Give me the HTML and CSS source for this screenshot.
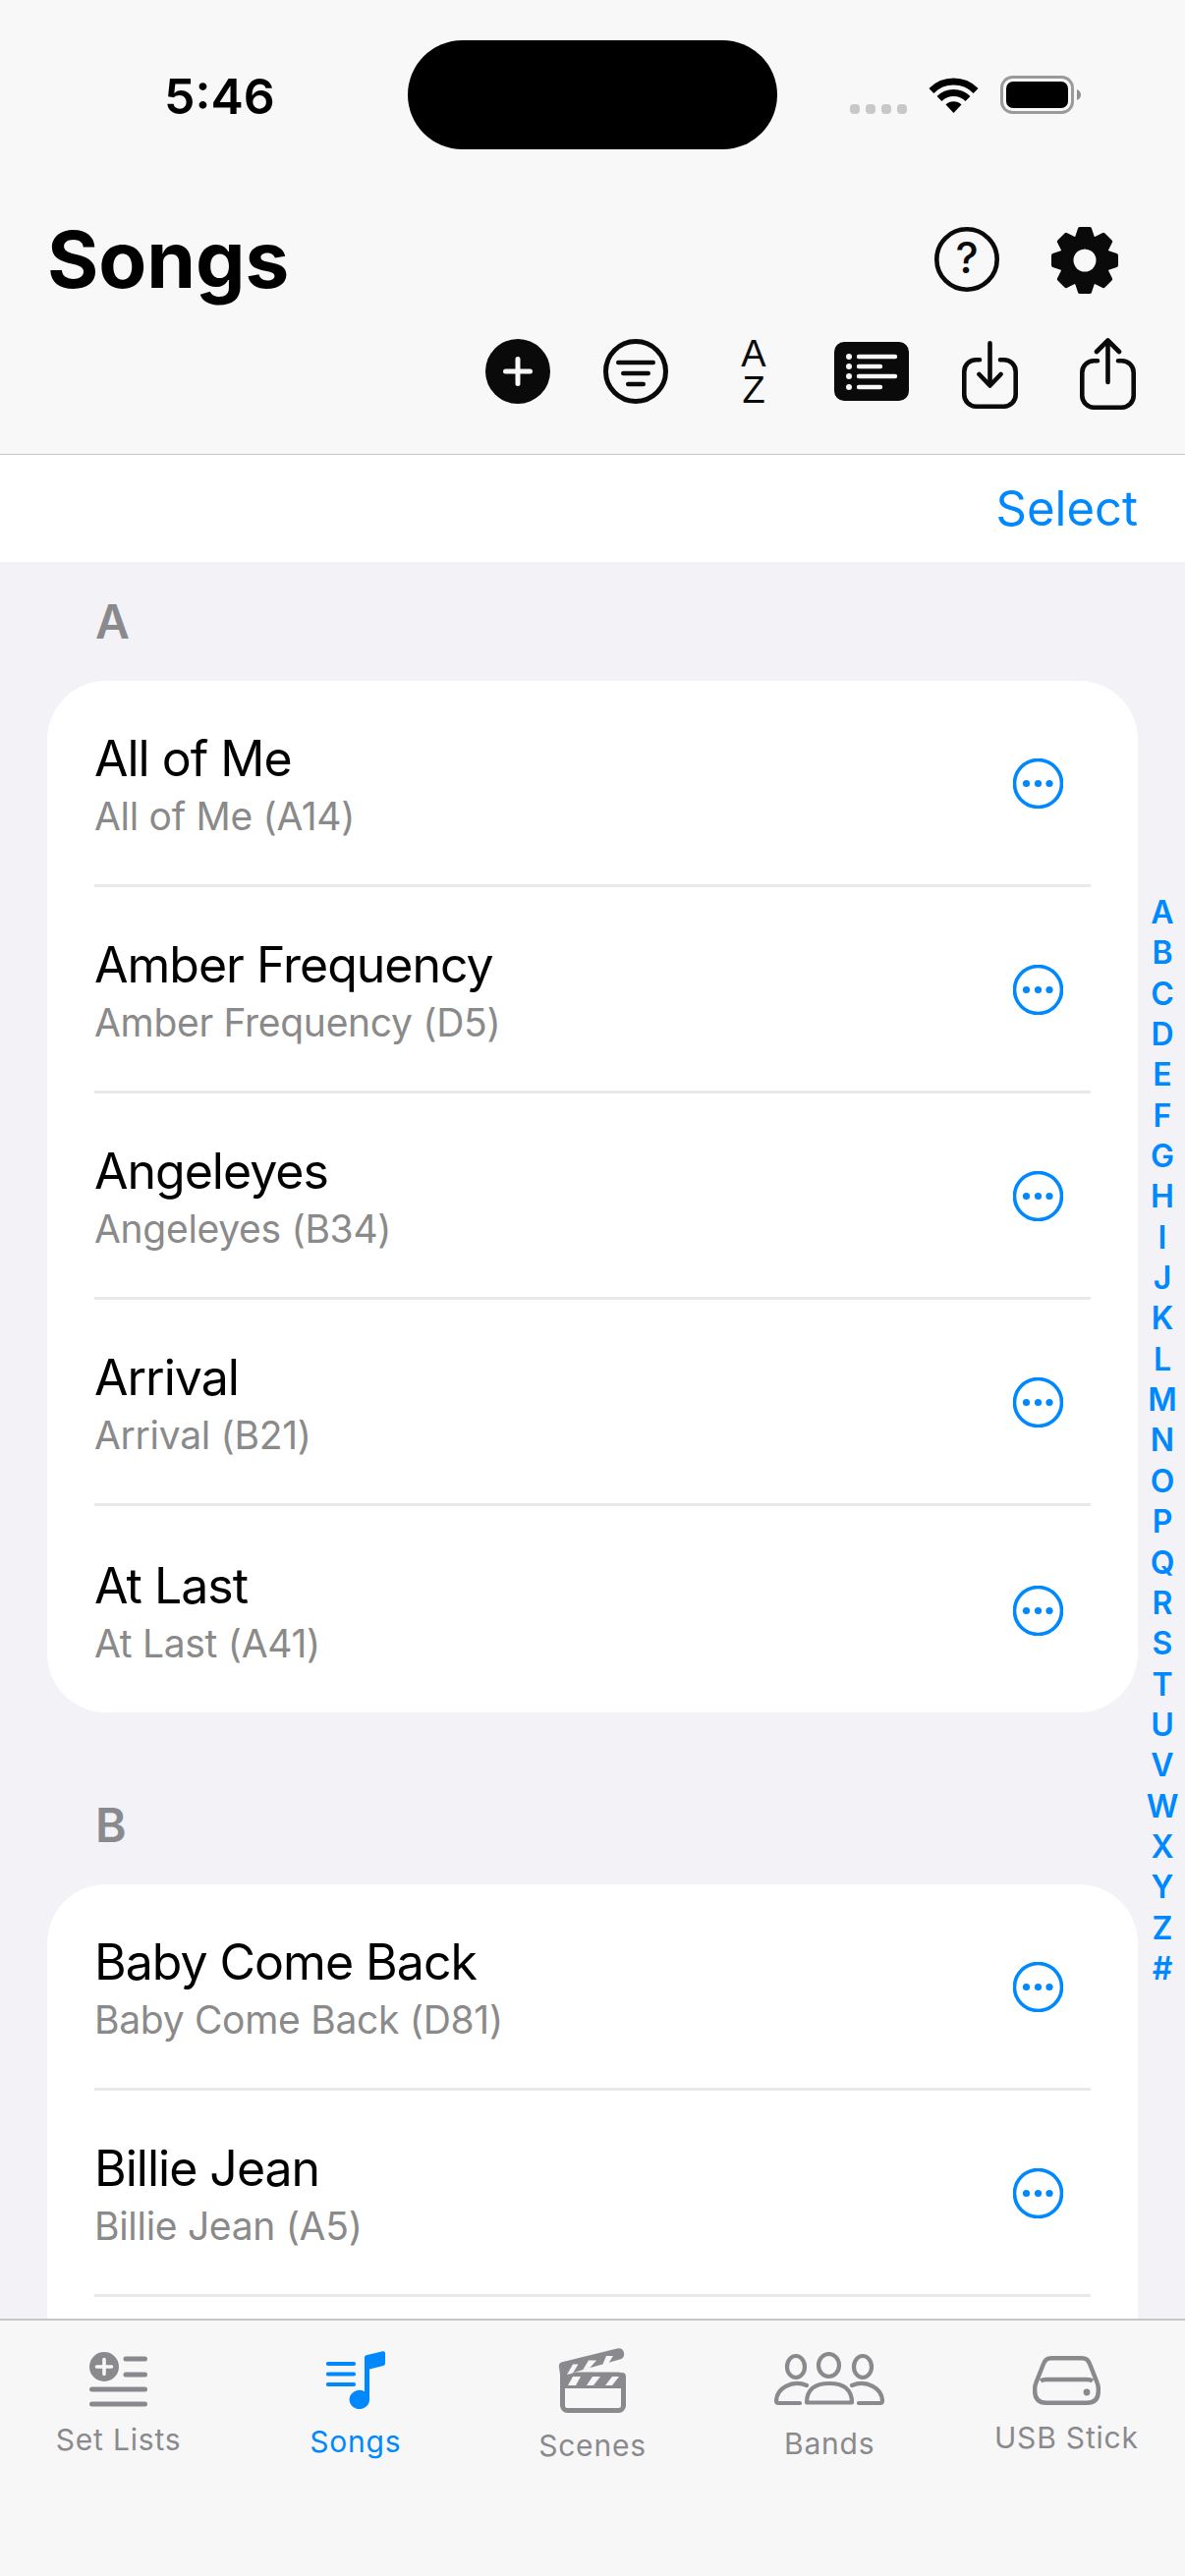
FILE: index.html
```html
<!DOCTYPE html>
<html lang="en">
<head>
  <meta charset="UTF-8" />
  <title>Songs</title>
  <link rel="stylesheet" href="styles.css">
</head>
<body>
<div class="app">

  <header class="top">
    <div class="status">
      <span class="time">5:46</span>
      <span class="island"></span>
      <div class="status-right">
        <span class="signal"><i></i><i></i><i></i><i></i></span>
        <svg class="wifi" width="51" height="37" viewBox="0 0 51 37">
          <path d="M2.9 14.4A32 32 0 0 1 48.1 14.4" fill="none" stroke="#000" stroke-width="7"/>
          <path d="M11 22.5A20.5 20.5 0 0 1 40 22.5" fill="none" stroke="#000" stroke-width="7"/>
          <path d="M25.5 37L17.5 28.5A11.5 11.5 0 0 1 33.5 28.5Z" fill="#000"/>
        </svg>
        <svg class="battery" width="82" height="39" viewBox="0 0 82 39">
          <rect x="1.5" y="1.5" width="72" height="36" rx="11" fill="none" stroke="#9a9a9a" stroke-width="3"/>
          <rect x="6" y="6" width="63" height="27" rx="7" fill="#000"/>
          <path d="M78 14C80.5 15 82 17 82 19.5C82 22 80.5 24 78 25Z" fill="#8e8e8e"/>
        </svg>
      </div>
    </div>

    <div class="title-row">
      <h1>Songs</h1>
      <div class="title-actions">
        <button class="icon-btn">
          <svg width="66" height="66" viewBox="0 0 66 66">
            <circle cx="33" cy="33" r="30.7" fill="none" stroke="#0a0a0a" stroke-width="4.6"/>
            <text x="33" y="47" text-anchor="middle" class="help-mark">?</text>
          </svg>
        </button>
        <button class="icon-btn">
          <svg width="68" height="68" viewBox="-34 -34 68 68">
            <g fill="#0a0a0a" stroke="#0a0a0a" stroke-width="4" stroke-linejoin="round">
              <circle r="24"/>
              <path d="M-8 -23L-5 -32H5L8 -23Z"/>
              <path d="M-8 -23L-5 -32H5L8 -23Z" transform="rotate(45)"/>
              <path d="M-8 -23L-5 -32H5L8 -23Z" transform="rotate(90)"/>
              <path d="M-8 -23L-5 -32H5L8 -23Z" transform="rotate(135)"/>
              <path d="M-8 -23L-5 -32H5L8 -23Z" transform="rotate(180)"/>
              <path d="M-8 -23L-5 -32H5L8 -23Z" transform="rotate(225)"/>
              <path d="M-8 -23L-5 -32H5L8 -23Z" transform="rotate(270)"/>
              <path d="M-8 -23L-5 -32H5L8 -23Z" transform="rotate(315)"/>
            </g>
            <circle r="11.5" fill="#f8f8f8"/>
          </svg>
        </button>
      </div>
    </div>

    <div class="toolbar">
      <button class="icon-btn nudge-1">
        <svg width="66" height="66" viewBox="0 0 66 66">
          <circle cx="33" cy="33" r="33" fill="#0a0a0a"/>
          <path d="M20.5 33H45.5M33 20.5V45.5" stroke="#f8f8f8" stroke-width="5" stroke-linecap="round"/>
        </svg>
      </button>
      <button class="icon-btn nudge-1">
        <svg width="66" height="66" viewBox="0 0 66 66" fill="none" stroke="#0a0a0a">
          <circle cx="33" cy="33" r="30.5" stroke-width="5"/>
          <path d="M15.3 24H50.7M20.3 35H45.7M25.3 46H40.7" stroke-width="4.6" stroke-linecap="round"/>
        </svg>
      </button>
      <button class="icon-btn nudge-1">
        <span class="az"><span>A</span><span>Z</span></span>
      </button>
      <button class="icon-btn nudge-4">
        <svg width="76" height="60" viewBox="0 0 76 60">
          <rect width="76" height="60" rx="10" fill="#0a0a0a"/>
          <g fill="#f8f8f8">
            <circle cx="15" cy="15" r="3"/>
            <circle cx="15" cy="25" r="3"/>
            <circle cx="15" cy="35" r="3"/>
            <circle cx="15" cy="46" r="3"/>
          </g>
          <path d="M25 15H62M25 25H47M25 35H62M25 46H47" stroke="#f8f8f8" stroke-width="4.4" stroke-linecap="round"/>
        </svg>
      </button>
      <button class="icon-btn nudge-3">
        <svg width="57" height="69" viewBox="0 0 57 69" fill="none" stroke="#0a0a0a" stroke-width="4.6" stroke-linecap="round" stroke-linejoin="round">
          <path d="M18 19.2H14.5A12 12 0 0 0 2.3 31.2V54.5A12 12 0 0 0 14.5 66.7H42.5A12 12 0 0 0 54.7 54.5V31.2A12 12 0 0 0 42.5 19.2H39"/>
          <path d="M28.5 2.3V44M17.5 34L28.5 45.5L39.5 34"/>
        </svg>
      </button>
      <button class="icon-btn">
        <svg width="57" height="73" viewBox="0 0 57 73" fill="none" stroke="#0a0a0a" stroke-width="4.6" stroke-linecap="round" stroke-linejoin="round">
          <path d="M18 23.2H14.5A12 12 0 0 0 2.3 35.2V58.5A12 12 0 0 0 14.5 70.7H42.5A12 12 0 0 0 54.7 58.5V35.2A12 12 0 0 0 42.5 23.2H39"/>
          <path d="M28.5 45V2.5M17 14L28.5 2.5L40 14"/>
        </svg>
      </button>
    </div>
  </header>

  <div class="select-bar"><a class="select-link">Select</a></div>

  <main class="list">
    <section class="group">
      <h2>A</h2>
      <div class="card">
        <div class="row"><div class="row-inner">
          <div class="row-text"><div class="song">All of Me</div><div class="sub">All of Me (A14)</div></div>
          <svg class="more"><use href="#more-icon"/></svg>
        </div></div>
        <div class="row"><div class="row-inner">
          <div class="row-text"><div class="song">Amber Frequency</div><div class="sub">Amber Frequency (D5)</div></div>
          <svg class="more"><use href="#more-icon"/></svg>
        </div></div>
        <div class="row"><div class="row-inner">
          <div class="row-text"><div class="song">Angeleyes</div><div class="sub">Angeleyes (B34)</div></div>
          <svg class="more"><use href="#more-icon"/></svg>
        </div></div>
        <div class="row"><div class="row-inner">
          <div class="row-text"><div class="song">Arrival</div><div class="sub">Arrival (B21)</div></div>
          <svg class="more"><use href="#more-icon"/></svg>
        </div></div>
        <div class="row last"><div class="row-inner">
          <div class="row-text"><div class="song">At Last</div><div class="sub">At Last (A41)</div></div>
          <svg class="more"><use href="#more-icon"/></svg>
        </div></div>
      </div>
    </section>

    <section class="group">
      <h2>B</h2>
      <div class="card">
        <div class="row"><div class="row-inner">
          <div class="row-text"><div class="song">Baby Come Back</div><div class="sub">Baby Come Back (D81)</div></div>
          <svg class="more"><use href="#more-icon"/></svg>
        </div></div>
        <div class="row"><div class="row-inner">
          <div class="row-text"><div class="song">Billie Jean</div><div class="sub">Billie Jean (A5)</div></div>
          <svg class="more"><use href="#more-icon"/></svg>
        </div></div>
        <div class="row last"></div>
      </div>
    </section>

    <nav class="index">
      <span>A</span><span>B</span><span>C</span><span>D</span><span>E</span><span>F</span><span>G</span><span>H</span><span>I</span><span>J</span><span>K</span><span>L</span><span>M</span><span>N</span><span>O</span><span>P</span><span>Q</span><span>R</span><span>S</span><span>T</span><span>U</span><span>V</span><span>W</span><span>X</span><span>Y</span><span>Z</span><span>#</span>
    </nav>
  </main>

  <footer class="tabs">
    <div class="tab tab-setlists">
      <svg width="59" height="56" viewBox="0 0 59 56">
        <circle cx="15" cy="15" r="15" fill="currentColor"/>
        <path d="M7.5 15H22.5M15 7.5V22.5" stroke="#f7f7f7" stroke-width="3.6" stroke-linecap="round"/>
        <path d="M37 7H56.5M37 23H56.5M2.5 38H56.5M2.5 53H56.5" stroke="currentColor" stroke-width="5" stroke-linecap="round"/>
      </svg>
      <span>Set Lists</span>
    </div>
    <div class="tab tab-songs active">
      <svg width="60" height="59" viewBox="0 0 60 59">
        <path d="M2 13H28M2 23.5H28M2 34H28" stroke="currentColor" stroke-width="4.2" stroke-linecap="round"/>
        <path d="M39 6.5Q39 4.8 40.8 4.3L57.5 0.3Q60 -0.2 60 2.3V12.5Q60 14.6 58 15.1L44 18.6V49.5A10.2 9.6 0 1 1 39 41.2Z" fill="currentColor"/>
      </svg>
      <span>Songs</span>
    </div>
    <div class="tab tab-scenes">
      <svg width="69" height="66" viewBox="0 0 69 66">
        <rect x="4.5" y="27" width="62" height="36.5" rx="5" fill="none" stroke="currentColor" stroke-width="5"/>
        <path d="M2 29Q2 25 6 25H65Q69 25 69 29V41H2Z" fill="currentColor"/>
        <path d="M15 29H23L18 38H10ZM35 29H43L36 38H29ZM55 29H62L55 38H48Z" fill="#f7f7f7"/>
        <path d="M1 20Q0 15 5 14L60 0.5Q66 -0.5 67 5Q68 10 63 11.5L8 27V34H3Z" fill="currentColor"/>
        <path d="M15 16.5H20.5L15 25.5L9 27ZM31 12.5H39L32 20.5L25 22.5ZM49 8H56L51 16L45 17.5Z" fill="#f7f7f7"/>
      </svg>
      <span>Scenes</span>
    </div>
    <div class="tab tab-bands">
      <svg width="112" height="54" viewBox="0 0 112 54" fill="none" stroke="currentColor" stroke-width="4.2" stroke-linecap="round" stroke-linejoin="round">
        <ellipse cx="55.5" cy="13.5" rx="10.5" ry="11.5"/>
        <ellipse cx="22" cy="15" rx="9" ry="11"/>
        <ellipse cx="90" cy="15" rx="9" ry="11"/>
        <path d="M33 51.5Q33 32 56 32Q79 32 79 51.5H33Z"/>
        <path d="M33 34C18 28 2 37 2 50Q2 52 4.5 52H26"/>
        <path d="M79 34C94 28 110 37 110 50Q110 52 107.5 52H86"/>
      </svg>
      <span>Bands</span>
    </div>
    <div class="tab tab-usb">
      <svg width="69" height="50" viewBox="0 0 69 50" fill="none" stroke="currentColor" stroke-width="4.4" stroke-linejoin="round">
        <path d="M19 2.2H50Q56 2.2 58 8L65.5 27Q66.8 30 66.8 33V36Q66.8 47.8 55 47.8H14Q2.2 47.8 2.2 36V33Q2.2 30 3.5 27L11 8Q13 2.2 19 2.2Z"/>
        <path d="M8 25.5Q10 24 14 24H55Q59 24 61 25.5"/>
        <circle cx="55" cy="37" r="3.4" fill="currentColor" stroke="none"/>
      </svg>
      <span>USB Stick</span>
    </div>
  </footer>

</div>

<!-- shared "more" glyph for the song rows -->
<svg class="defs" width="0" height="0">
  <symbol id="more-icon" viewBox="0 0 51 51">
    <circle cx="25.5" cy="25.5" r="24" fill="none" stroke="#0088ff" stroke-width="3.6"/>
    <circle cx="13.5" cy="25.5" r="3.6" fill="#0088ff"/>
    <circle cx="25.5" cy="25.5" r="3.6" fill="#0088ff"/>
    <circle cx="37" cy="25.5" r="3.6" fill="#0088ff"/>
  </symbol>
</svg>
</body>
</html>
```

FILE: styles.css
```css
* { box-sizing: border-box; }
html, body { margin: 0; height: 100%; }
body { font-family: Inter, "Liberation Sans", sans-serif; background: #f2f2f7; color: #000; }
.app { width: 1206px; height: 2622px; display: flex; flex-direction: column; overflow: hidden; position: relative; }
.defs { position: absolute; }

.top { height: 463px; flex: none; background: #f8f8f8; border-bottom: 1px solid #c6c6c8; }
.status { display: flex; padding-top: 41px; height: 152px; }
.time { width: 415px; padding-left: 167px; padding-top: 2px; font-size: 50px; font-weight: 600; line-height: 111px; height: 111px; }
.island { width: 376px; height: 111px; border-radius: 56px; background: #000; }
.status-right { position: relative; display: flex; margin-left: 74px; padding-top: 37px; }
.signal { display: flex; gap: 6px; margin-top: 28px; height: 10px; }
.signal i { width: 10px; height: 10px; border-radius: 4px; background: #c8c8c8; }
.wifi { margin-left: 22px; }
.battery { margin-left: 22px; margin-top: -1px; }

.title-row { display: flex; justify-content: space-between; margin-top: 79px; height: 66px; }
h1 { margin: 0 0 0 48px; font-size: 80px; line-height: 66px; font-weight: 700; letter-spacing: -0.1px; }
.title-actions { display: flex; margin-right: 42px; }
.icon-btn { width: 120px; padding: 0; border: 0; background: none; display: flex; justify-content: center; align-items: flex-start; }
.help-mark { font-family: Inter, sans-serif; font-size: 44px; font-weight: 500; fill: #0a0a0a; }

.toolbar { display: flex; justify-content: flex-end; margin-top: 47px; padding-right: 19px; height: 74px; }
.nudge-1 { padding-top: 1px; }
.nudge-3 { padding-top: 3px; }
.nudge-4 { padding-top: 4px; }
.az { display: flex; flex-direction: column; align-items: center; font-size: 38px; font-weight: 500; color: #0a0a0a; line-height: 37px; margin-top: -3px; }

.select-bar { height: 109px; flex: none; background: #fff; display: flex; align-items: center; justify-content: flex-end; padding-right: 48px; }
.select-link { font-size: 49px; color: #0088ff; }

.list { flex: 1; overflow: hidden; position: relative; }
.group { padding: 0 48px 54px; }
h2 { margin: 0; height: 121px; padding: 26px 0 0 49px; font-size: 48px; line-height: 70px; font-weight: 600; color: #8a8a8e; }
.card { background: #fff; border-radius: 60px; }
.row { height: 210px; padding: 0 48px; }
.row-inner { height: 210px; padding-right: 28px; border-bottom: 3px solid #e9e9ea; display: flex; align-items: center; justify-content: space-between; }
.row.last .row-inner { border-bottom: 0; }
.row-text { padding-top: 4px; }
.song { font-size: 50px; line-height: 62px; letter-spacing: -1px; }
.sub { font-size: 39px; line-height: 50px; letter-spacing: -0.3px; margin-top: 3px; color: #8a8a8a; }
.more { width: 51px; height: 51px; margin-top: 2px; }

.index { position: absolute; top: 336px; right: 0; width: 46px; display: flex; flex-direction: column; align-items: center; color: #0088ff; font-size: 32px; font-weight: 600; line-height: 41.35px; }

.tabs { height: 262px; flex: none; background: #f7f7f7; border-top: 2px solid #c6c6c8; display: grid; grid-template-columns: repeat(5, 1fr); color: #8a8a8e; }
.tab { display: flex; flex-direction: column; align-items: center; }
.tab span { font-size: 30px; line-height: 36px; letter-spacing: 0.8px; margin-top: 15px; }
.tab.active { color: #0088ff; }
.tab-setlists { padding-top: 32px; }
.tab-songs { padding-top: 31px; }
.tab-scenes { padding-top: 28px; }
.tab-bands { padding-top: 32px; }
.tab-bands span { margin-top: 21px; }
.tab-usb { padding-top: 36px; }
```
